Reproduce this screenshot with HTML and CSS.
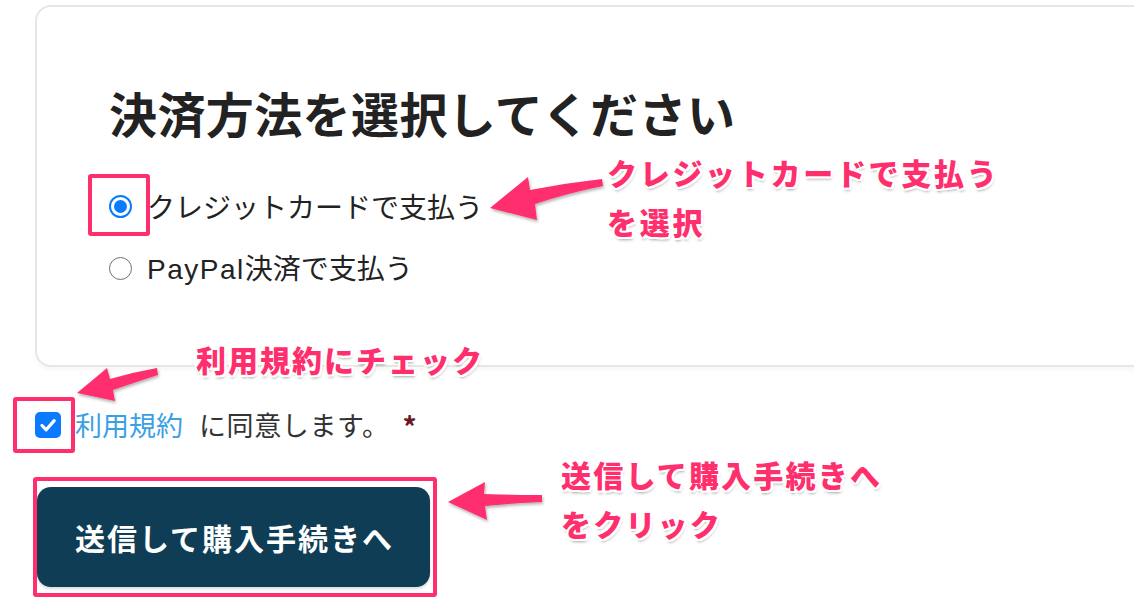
FILE: index.html
```html
<!DOCTYPE html>
<html lang="ja">
<head>
<meta charset="utf-8">
<title>決済方法を選択してください</title>
<link rel="stylesheet" href="styles.css">
</head>
<body>
<div class="page">
  <section class="card">
    <h2 class="title">決済方法を選択してください</h2>
    <div class="options">
      <label class="option"><span class="radio is-checked"></span><span class="option-label">クレジットカードで支払う</span></label>
      <label class="option"><span class="radio"></span><span class="option-label"><span class="latin">PayPal</span>決済で支払う</span></label>
    </div>
  </section>

  <div class="agree">
    <span class="checkbox">
      <svg viewBox="0 0 26 26" width="26" height="26"><path d="M7 13.5 L11.2 17.8 L19.2 8.6" fill="none" stroke="#fff" stroke-width="3.2" stroke-linecap="round" stroke-linejoin="round"/></svg>
    </span>
    <a class="terms">利用規約</a>
    <span class="agree-text">に同意します。</span>
    <span class="required">*</span>
  </div>

  <button class="submit">送信して購入手続きへ</button>

  <div class="annotations">
    <div class="hl hl-radio"></div>
    <div class="hl hl-check"></div>
    <div class="hl hl-button"></div>

    <svg class="arrows" viewBox="0 0 1134 606" width="1134" height="606">
      <defs>
        <filter id="sh" x="-20%" y="-20%" width="140%" height="160%">
          <feDropShadow dx="1" dy="2" stdDeviation="1.5" flood-color="#000" flood-opacity="0.3"/>
        </filter>
      </defs>
      <g fill="#ff2f6e" filter="url(#sh)">
        <path d="M490 208 L528 177 L530 190 Q566 183 602 179 L603 186 Q568 193 535 204 L537 220 Z"/>
        <path d="M77 393 L107 368 L110 379 Q134 372 157 368 L158 375 Q136 382 113 390 L115 401 Z"/>
        <path d="M448 502 L485 482 L484 494 Q515 495 542 495 L542 502 Q515 503 485 506 L487 520 Z"/>
      </g>
    </svg>

    <div class="note note-card">クレジットカードで支払う<br>を選択</div>
    <div class="note note-terms">利用規約にチェック</div>
    <div class="note note-submit">送信して購入手続きへ<br>をクリック</div>
  </div>
</div>
</body>
</html>
```

FILE: styles.css
```css
* { box-sizing: border-box; }

html, body {
  margin: 0;
  padding: 0;
  background: #ffffff;
}

body {
  font-family: "Noto Sans CJK JP", "Noto Sans", sans-serif;
  color: #222;
}

.page {
  position: relative;
  width: 1134px;
  height: 606px;
  overflow: hidden;
  padding-top: 5px;
}

.card {
  margin: 0 -80px 0 35px;
  height: 362px;
  border: 2px solid #e6e6e6;
  border-radius: 16px;
  background: #fff;
  box-shadow: 0 3px 5px rgba(0, 0, 0, 0.035);
  padding: 77px 0 0 72px;
}

.title {
  margin: 0;
  font-size: 48px;
  line-height: 56px;
  font-weight: 700;
  letter-spacing: 0.4px;
  color: #222;
}

.options {
  margin-top: 46px;
  display: flex;
  flex-direction: column;
  gap: 22px;
}

.option {
  display: flex;
  align-items: center;
  height: 40px;
  font-size: 28px;
  line-height: 40px;
  color: #222;
}

.latin {
  font-family: "Liberation Sans", "Noto Sans CJK JP", sans-serif;
  letter-spacing: 1.5px;
}

.radio {
  width: 23px;
  height: 23px;
  margin-left: 0;
  margin-right: 15px;
  border-radius: 50%;
  border: 1.5px solid #6f6f6f;
  background: #fff;
  flex: none;
  display: flex;
  align-items: center;
  justify-content: center;
}

.radio.is-checked {
  border: 2px solid #0a7aff;
}

.radio.is-checked::after {
  content: "";
  width: 13px;
  height: 13px;
  border-radius: 50%;
  background: #0a7aff;
}

.agree {
  margin: 38px 0 0 35px;
  height: 40px;
  display: flex;
  align-items: center;
  font-size: 27px;
  line-height: 40px;
}

.checkbox {
  width: 26px;
  height: 26px;
  border-radius: 5px;
  background: #0a7aff;
  flex: none;
  margin-right: 14px;
  display: flex;
}

.terms {
  color: #3aa0e6;
  text-decoration: none;
}

.agree-text {
  margin-left: 16px;
  color: #333;
  letter-spacing: 0.6px;
}

.required {
  margin-left: 13px;
  font-size: 28px;
  line-height: 28px;
  font-weight: 700;
  color: #6b1a25;
  align-self: flex-start;
  margin-top: 7px;
}

.submit {
  display: flex;
  align-items: center;
  justify-content: center;
  margin: 42px 0 0 37px;
  width: 393px;
  height: 100px;
  padding: 0 0 0 2px;
  border: none;
  border-radius: 14px;
  background: #0f3d56;
  color: #fff;
  font-family: "Noto Sans CJK JP", "Noto Sans", sans-serif;
  font-size: 30px;
  font-weight: 700;
  letter-spacing: 2px;
  box-shadow: 0 2px 3px rgba(0, 0, 0, 0.15);
}

/* annotation overlay */
.annotations {
  position: absolute;
  inset: 0;
  pointer-events: none;
}

.hl {
  position: absolute;
  border: 4px solid #ff2f6e;
  border-radius: 3px;
}

.hl-radio { left: 88px; top: 174px; width: 62px; height: 62px; }
.hl-check { left: 13px; top: 397px; width: 62px; height: 56px; }
.hl-button { left: 33px; top: 477px; width: 404px; height: 120px; }

.arrows {
  position: absolute;
  left: 0;
  top: 0;
}

.note {
  position: absolute;
  font-size: 30px;
  line-height: 49px;
  font-weight: 900;
  letter-spacing: 2px;
  color: #ff2f6e;
  white-space: nowrap;
  text-shadow:
    -2px -2px 0 #fff, 2px -2px 0 #fff, -2px 2px 0 #fff, 2px 2px 0 #fff,
    0 -2px 0 #fff, 0 2px 0 #fff, -2px 0 0 #fff, 2px 0 0 #fff,
    1px 3px 3px rgba(0, 0, 0, 0.35);
}

.note-card { left: 607px; top: 148px; letter-spacing: 2.7px; }
.note-terms { left: 196px; top: 335px; }
.note-submit { left: 561px; top: 450px; letter-spacing: 2.2px; }
```
